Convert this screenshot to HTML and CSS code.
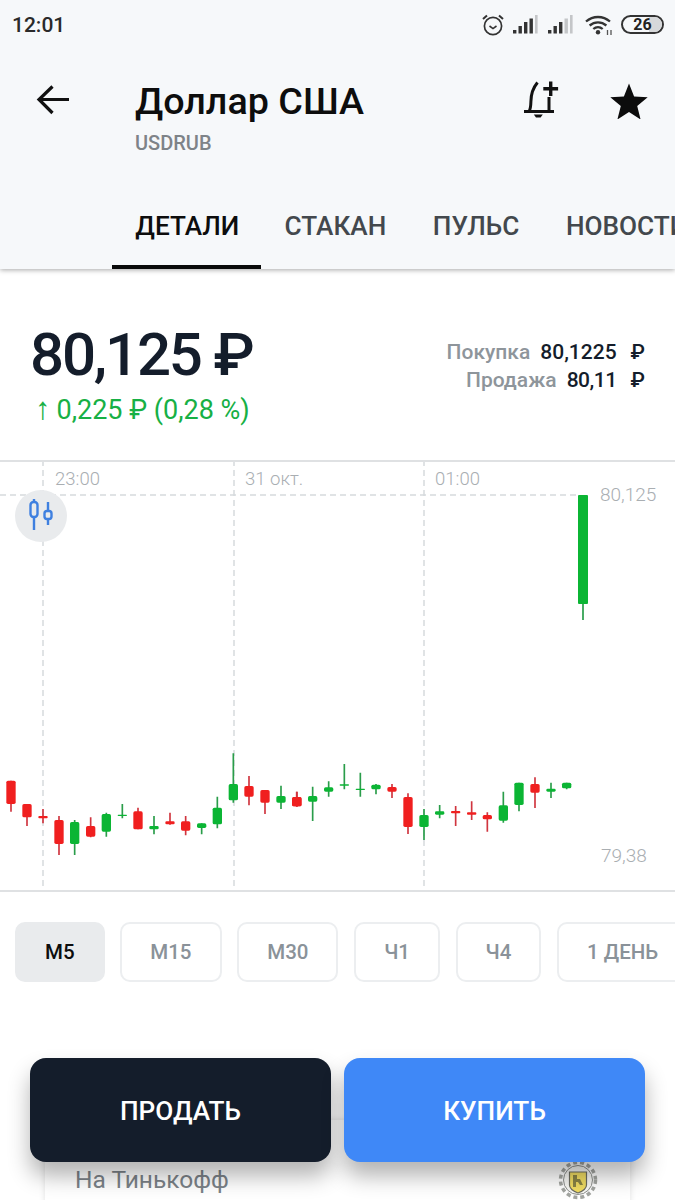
FILE: index.html
```html
<!DOCTYPE html>
<html lang="ru">
<head>
<meta charset="utf-8">
<title>Доллар США</title>
<link rel="stylesheet" href="styles.css">
</head>
<body>
<div class="screen">
  <header class="header">
    <div class="status">
      <span class="clock">12:01</span>
      <div class="status-icons">
        <svg class="i-alarm" width="24" height="24" viewBox="0 0 24 24"><circle cx="12" cy="13" r="8.6" fill="none" stroke="#333" stroke-width="1.7"/><path d="M8.5 13l3.5 2.6 3.5-2.6" fill="none" stroke="#333" stroke-width="1.6"/><path d="M2 6l4-3.6M22 6l-4-3.6" stroke="#333" stroke-width="2"/></svg>
        <svg class="i-signal" width="25" height="19" viewBox="0 0 25 19"><rect x="0" y="15" width="3.4" height="3.5" fill="#333"/><rect x="5.5" y="11" width="3.4" height="7.5" fill="#333"/><rect x="11" y="7" width="3.4" height="11.5" fill="#333"/><rect x="16.5" y="3.5" width="3.4" height="15" fill="#333"/><rect x="22" y="0" width="2.6" height="18.5" fill="#c4c6c8"/></svg>
        <svg class="i-signal" width="25" height="19" viewBox="0 0 25 19"><rect x="0" y="15" width="3.4" height="3.5" fill="#333"/><rect x="5.5" y="11" width="3.4" height="7.5" fill="#333"/><rect x="11" y="7" width="3.4" height="11.5" fill="#333"/><rect x="16.5" y="3.5" width="3.4" height="15" fill="#c4c6c8"/><rect x="22" y="0" width="2.6" height="18.5" fill="#c4c6c8"/></svg>
        <svg class="i-wifi" width="28" height="20" viewBox="0 0 28 20"><path d="M1 6.5C8 .5 18 .5 25 6.5M4.6 10.5c5-4.2 11.800-4.200 16.800 0M8.300 14c2.800-2.400 6.600-2.400 9.400 0" fill="none" stroke="#333" stroke-width="2.300"/><circle cx="13" cy="17.300" r="2.200" fill="#333"/><path d="M22.500 15v5M26 15v5" stroke="#555" stroke-width="1.300"/></svg>
        <div class="battery"><span class="battery-fill"></span><span class="battery-num">26</span></div>
      </div>
    </div>
    <div class="titlebar">
      <svg class="back" width="34" height="32" viewBox="0 0 34 32"><path d="M33 15.500H4M16.500 2.500L3 15.500l13.500 13.500" fill="none" stroke="#111" stroke-width="3.200"/></svg>
      <div class="title-block">
        <h1 class="title">Доллар США</h1>
        <div class="ticker">USDRUB</div>
      </div>
      <svg class="bell" width="36" height="38" viewBox="0 0 36 38"><path d="M0 29.500h30M5 29.500c1.800-2.500 1.800-6 1.900-10 .1-7 2-13.500 6.600-19M25 15v14.500" fill="none" stroke="#111" stroke-width="3"/><path d="M9.800 32.600h9l-2.200 3h-4.600z" fill="#111"/><path d="M19.300 6.700h14.800M26.700 -.5v14.500" stroke="#111" stroke-width="3.400"/></svg>
      <svg class="star" width="38" height="36" viewBox="0 0 38 36"><path d="M19 .5l5.100 12.900 13.600.9-10.500 8.800 3.400 13.400L19 29.100 7.400 36.500l3.400-13.400L.3 14.300l13.600-.9z" fill="#0c0c0c"/></svg>
    </div>
    <nav class="tabs">
      <span class="tab tab-active">ДЕТАЛИ</span>
      <span class="tab">СТАКАН</span>
      <span class="tab">ПУЛЬС</span>
      <span class="tab">НОВОСТИ</span>
    </nav>
  </header>

  <section class="price">
    <div class="price-main">
      <div class="price-value">80,125 ₽</div>
      <div class="price-change"><span class="price-arrow">↑</span>0,225 ₽ (0,28 %)</div>
    </div>
    <div class="quotes">
      <div class="quote"><span class="quote-label">Покупка</span><span class="quote-num">80,1225</span><span class="quote-cur">₽</span></div>
      <div class="quote"><span class="quote-label">Продажа</span><span class="quote-num quote-num-tight">80,11</span><span class="quote-cur">₽</span></div>
    </div>
  </section>

  <section class="chart">
    <svg class="chart-svg" width="675" height="428" viewBox="0 2 675 428">
      <path class="grid" d="M43 0V430M234 0V430M424 0V430M0 35H578"/>
      <text class="axis" x="55" y="25">23:00</text>
      <text class="axis" x="245" y="25">31 окт.</text>
      <text class="axis" x="435" y="25">01:00</text>
      <text class="axis axis-y" x="600" y="41">80,125</text>
      <text class="axis axis-y" x="601" y="402">79,38</text>
      <g transform="translate(0 280) scale(.33333)">
        <g class="dn">
          <path d="M33 122V215M81 192V258M129 207V250M177 228V345M272 232V292M414 203V268M510 218V254M557 228V286M747 108V196M795 150V222M890 155V200"/>
          <rect x="19" y="122" width="28" height="70" rx="5"/>
          <rect x="67" y="192" width="28" height="40" rx="5"/>
          <rect x="115" y="228" width="28" height="7" rx="3"/>
          <rect x="163" y="240" width="28" height="72" rx="5"/>
          <rect x="258" y="258" width="28" height="32" rx="5"/>
          <rect x="400" y="214" width="28" height="54" rx="5"/>
          <rect x="496" y="244" width="28" height="9" rx="4"/>
          <rect x="543" y="244" width="28" height="28" rx="5"/>
          <rect x="733" y="138" width="28" height="32" rx="5"/>
          <rect x="781" y="150" width="28" height="38" rx="5"/>
          <rect x="876" y="171" width="28" height="28" rx="5"/>
        </g>
        <g class="up">
          <path d="M224 240V345M319 218V290M367 192V235M462 228V283M605 250V283M652 170V265M700 40V188M843 137V207"/>
          <rect x="210" y="246" width="28" height="66" rx="5"/>
          <rect x="305" y="222" width="28" height="53" rx="5"/>
          <rect x="353" y="224" width="28" height="4" rx="2"/>
          <rect x="448" y="258" width="28" height="10" rx="4"/>
          <rect x="591" y="250" width="28" height="14" rx="5"/>
          <rect x="638" y="203" width="28" height="50" rx="5"/>
          <rect x="686" y="132" width="28" height="49" rx="5"/>
          <rect x="829" y="168" width="28" height="20" rx="5"/>
        </g>
      </g>
      <g transform="translate(290 280) scale(.33333)">
        <g class="dn">
          <path d="M21 155V200M306 132V174M354 160V282M497 198V258M545 184V240M592 217V275M735 112V204"/>
          <rect x="7" y="171" width="28" height="28" rx="5"/>
          <rect x="292" y="141" width="28" height="14" rx="5"/>
          <rect x="340" y="171" width="28" height="90" rx="5"/>
          <rect x="483" y="213" width="28" height="7" rx="3"/>
          <rect x="531" y="217" width="28" height="7" rx="3"/>
          <rect x="578" y="225" width="28" height="13" rx="5"/>
          <rect x="721" y="132" width="28" height="26" rx="5"/>
        </g>
        <g class="up">
          <path d="M68 140V243M116 124V170M163 72V148M211 98V170M258 132V163M402 207V300M449 195V235M640 155V248M687 128V214M783 128V174M830 128V148"/>
          <rect x="54" y="168" width="28" height="17" rx="5"/>
          <rect x="102" y="142" width="28" height="13" rx="5"/>
          <rect x="149" y="133" width="28" height="4" rx="2"/>
          <rect x="197" y="146" width="28" height="4" rx="2"/>
          <rect x="244" y="134" width="28" height="14" rx="5"/>
          <rect x="388" y="225" width="28" height="36" rx="5"/>
          <rect x="435" y="214" width="28" height="10" rx="4"/>
          <rect x="626" y="196" width="28" height="46" rx="5"/>
          <rect x="673" y="128" width="28" height="67" rx="5"/>
          <rect x="769" y="146" width="28" height="9" rx="4"/>
          <rect x="816" y="128" width="28" height="17" rx="5"/>
        </g>
      </g>
      <path class="wick-big" d="M583 35V160"/>
      <rect class="body-big" x="578" y="35" width="10" height="109" rx="1"/>
    </svg>
    <button class="mode" type="button" aria-label="Вид графика">
      <svg width="28" height="34" viewBox="0 0 28 34"><path d="M7 0V31M21 3V26" stroke="#3f80e0" stroke-width="2.400" fill="none"/><rect x="3.500" y="3" width="7" height="15" rx="3" fill="#e9ebed" stroke="#3f80e0" stroke-width="2.400"/><rect x="17.500" y="12" width="7" height="8" rx="2.500" fill="#e9ebed" stroke="#3f80e0" stroke-width="2.400"/></svg>
    </button>
  </section>

  <div class="frames">
    <span class="chip chip-active">М5</span>
    <span class="chip">М15</span>
    <span class="chip">М30</span>
    <span class="chip">Ч1</span>
    <span class="chip">Ч4</span>
    <span class="chip">1 ДЕНЬ</span>
  </div>

  <div class="card">
    <span class="card-text">На Тинькофф</span>
    <svg class="emblem" width="42" height="40" viewBox="0 0 42 40">
      <circle cx="21" cy="20" r="17.500" fill="none" stroke="#a3a5a1" stroke-width="3.500" stroke-dasharray="4 3"/>
      <circle cx="21" cy="20" r="14.500" fill="#f7f7f4" stroke="#8c8e8b" stroke-width="1"/>
      <path d="M12.500 12H29.500V25C29.500 29 25 31.500 21 33 17 31.500 12.500 29 12.500 25Z" fill="#f0dc62" stroke="#6d6d60" stroke-width="1.200"/>
      <path d="M16 15h4v4h3l3 6h-3l-2-3h-2v5h-3z" fill="#8a8445"/>
    </svg>
  </div>

  <div class="actions">
    <button class="action action-sell" type="button">ПРОДАТЬ</button>
    <button class="action action-buy" type="button">КУПИТЬ</button>
  </div>
</div>
</body>
</html>
```
FILE: styles.css
```css
* { box-sizing: border-box; }
html, body { margin: 0; padding: 0; background: #fff; }
body { font-family: Roboto, "Liberation Sans", sans-serif; }
.screen { position: relative; width: 675px; height: 1200px; overflow: hidden; background: #fff; }

.header { height: 269px; background: #f6f8fa; box-shadow: 0 1px 5px rgba(0,0,0,.35); position: relative; overflow: hidden; }
.status { height: 49px; display: flex; align-items: center; justify-content: space-between; padding: 0 11px 0 12px; }
.clock { font-size: 21px; font-weight: 500; color: #2a2a2a; }
.status-icons { display: flex; align-items: center; }
.i-alarm { margin-right: 8px; }
.i-signal { margin-right: 10px; }
.i-wifi { margin-left: 2px; margin-right: 8px; }
.battery { position: relative; width: 43px; height: 19px; border: 2px solid #333; border-radius: 10px; display: flex; align-items: center; justify-content: center; overflow: hidden; }
.battery-fill { position: absolute; right: 0; top: 0; bottom: 0; width: 13px; background: #d6d8da; }
.battery-num { position: relative; font-size: 16px; font-weight: 700; color: #222; line-height: 1; }

.titlebar { position: relative; display: flex; align-items: flex-start; height: 129px; padding: 30px 27px 0 36px; }
.back { margin-top: 5px; flex: none; }
.title-block { margin-left: 65px; flex: 1; }
.title { margin: 0; font-size: 37.700px; line-height: 44px; font-weight: 500; color: #0d0d0d; }
.ticker { margin-top: 8px; font-size: 20px; line-height: 24px; font-weight: 500; color: #7e8388; }
.bell { flex: none; margin-right: 50px; margin-top: 3px; overflow: visible; }
.star { flex: none; margin-top: 4px; }

.tabs { display: flex; height: 91px; padding-left: 112px; white-space: nowrap; }
.tab { padding: 30px 23.300px 0; font-size: 26.200px; line-height: 36px; font-weight: 500; color: #43484d; flex: none; }
.tab-active { color: #0d0d0d; border-bottom: 4px solid #0a0a0a; padding-right: 22px; }

.price { height: 191px; display: flex; justify-content: space-between; padding: 51px 30px 0 30px; }
.price-value { font-size: 60px; line-height: 70px; font-weight: 500; color: #141d2b; letter-spacing: -2.200px; }
.price-change { margin-top: 3px; padding-left: 5px; font-size: 27px; line-height: 32px; color: #17b045; }
.price-arrow { margin-right: 6px; font-size: 31px; line-height: 1; }
.quotes { padding-top: 18px; display: flex; flex-direction: column; align-items: flex-end; }
.quote { display: flex; font-size: 21px; line-height: 28px; font-weight: 500; }
.quote-label { color: #8e959b; margin-right: 10px; font-weight: 500; }
.quote-num { color: #141d2b; }
.quote-num-tight { letter-spacing: -.500px; }
.quote-cur { color: #141d2b; margin-left: 14px; }

.chart { position: relative; height: 432px; border-top: 2px solid #dfe1e3; border-bottom: 2px solid #dfe1e3; }
.chart-svg { display: block; }
.grid { fill: none; stroke: #d6dadd; stroke-width: 1.500; stroke-dasharray: 6 4; }
.axis { font-family: Roboto, sans-serif; font-size: 18.500px; font-weight: 300; fill: #a9aeb2; }
.axis-y { font-size: 19px; }
.up path, .dn path { stroke-width: 5; fill: none; }
.up rect { fill: #0bb534; }
.up path { stroke: #2a9d4a; }
.dn rect { fill: #f01f1f; }
.dn path { stroke: #d0353f; }
.wick-big { stroke: #2a9d4a; stroke-width: 1.700; fill: none; }
.body-big { fill: #0bb534; }
.mode { position: absolute; left: 15px; top: 28px; width: 52px; height: 52px; padding: 0; border: 0; border-radius: 50%; background: #e9ebed; display: flex; align-items: center; justify-content: center; }

.frames { display: flex; gap: 15.700px; padding: 30px 0 0 15px; white-space: nowrap; }
.chip { flex: none; height: 60px; padding: 0 28px; display: flex; align-items: center; border: 2px solid #eceef0; border-radius: 10px; font-size: 20.500px; font-weight: 500; color: #8a9299; }
.chip-active { background: #e9ebed; border-color: #e9ebed; color: #0d0d0d; }

.card { position: absolute; left: 45px; width: 585px; top: 1120px; height: 100px; background: #fff; box-shadow: 0 0 6px rgba(0,0,0,.12); display: flex; align-items: flex-start; justify-content: space-between; padding: 44px 31px 0 30px; }
.card-text { font-size: 24.500px; line-height: 32px; color: #7b8288; }
.emblem { margin-top: -4px; flex: none; }

.actions { position: absolute; left: 30px; top: 1058px; width: 615px; display: flex; gap: 13px; }
.action { flex: 1; height: 104px; padding-top: 2px; border: 0; border-radius: 16px; font-family: Roboto, sans-serif; font-size: 26.200px; font-weight: 500; color: #fff; box-shadow: 0 14px 22px rgba(0,0,0,.3); }
.action-sell { background: #141d2b; }
.action-buy { background: #3f88f7; }
```
